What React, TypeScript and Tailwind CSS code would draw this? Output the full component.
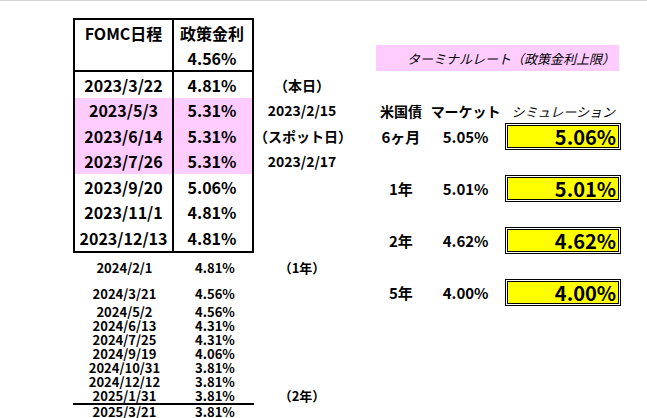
import React from 'react';

const tableRows = [
  { date: '2023/3/22', rate: '4.81%', pink: false, note: '（本日）' },
  { date: '2023/5/3', rate: '5.31%', pink: true, note: '2023/2/15' },
  { date: '2023/6/14', rate: '5.31%', pink: true, note: '（スポット日）' },
  { date: '2023/7/26', rate: '5.31%', pink: true, note: '2023/2/17' },
  { date: '2023/9/20', rate: '5.06%', pink: false, note: '' },
  { date: '2023/11/1', rate: '4.81%', pink: false, note: '' },
  { date: '2023/12/13', rate: '4.81%', pink: false, note: '' },
];

// 表の下の行（高さはシートの行高に合わせる）
const lowerRows = [
  { date: '2024/2/1', rate: '4.81%', note: '（1年）', h: 'h-[30px]' },
  { date: '2024/3/21', rate: '4.56%', note: '', h: 'h-[22px]' },
  { date: '2024/5/2', rate: '4.56%', note: '', h: 'h-[14px]' },
  { date: '2024/6/13', rate: '4.31%', note: '', h: 'h-[14px]' },
  { date: '2024/7/25', rate: '4.31%', note: '', h: 'h-[14px]' },
  { date: '2024/9/19', rate: '4.06%', note: '', h: 'h-[14px]' },
  { date: '2024/10/31', rate: '3.81%', note: '', h: 'h-[14px]' },
  { date: '2024/12/12', rate: '3.81%', note: '', h: 'h-[14px]' },
  { date: '2025/1/31', rate: '3.81%', note: '（2年）', h: 'h-[14px]' },
];

const bonds = [
  { term: '6ヶ月', market: '5.05%', sim: '5.06%' },
  { term: '1年', market: '5.01%', sim: '5.01%' },
  { term: '2年', market: '4.62%', sim: '4.62%' },
  { term: '5年', market: '4.00%', sim: '4.00%' },
];

function SimBox({ value }: { value: string }) {
  return (
    <div className="h-[27px] w-[116px] border border-black bg-white p-[1px]">
      <div className="flex h-full items-center justify-end border border-black bg-[#ffff00] pr-[2px] text-[20px] font-bold leading-none">
        {value}
      </div>
    </div>
  );
}

function LowerRow({ date, rate, note, h }: { date: string; rate: string; note: string; h: string }) {
  return (
    <div className={`flex ${h}`}>
      <div className="flex w-[103px] items-center justify-center">{date}</div>
      <div className="flex w-[78px] items-center justify-center">{rate}</div>
      <div className="flex w-[96px] items-center justify-center">{note}</div>
    </div>
  );
}

export default function App() {
  return (
    <div className="h-[418px] w-[647px] overflow-hidden border-t border-[#d4d4d4] bg-white font-['Noto_Sans_CJK_JP','Liberation_Sans',sans-serif] text-black">
      <div className="flex pl-[73px] pt-[17px]">
        {/* 左側：FOMC日程表 */}
        <div className="w-[277px]">
          <div className="flex">
            <div className="w-[181px] border-2 border-black text-[16px] font-bold leading-none">
              <div className="flex border-b-2 border-black">
                <div className="w-[99px] border-r-2 border-black">
                  <div className="flex h-[25px] items-center justify-center">FOMC日程</div>
                  <div className="h-[25px]" />
                </div>
                <div className="w-[76px]">
                  <div className="flex h-[25px] items-center justify-center">政策金利</div>
                  <div className="flex h-[25px] items-center justify-center">4.56%</div>
                </div>
              </div>
              {tableRows.map((r) => (
                <div key={r.date} className={`flex h-[25.5px] ${r.pink ? 'bg-[#ffccff]' : ''}`}>
                  <div className="flex w-[99px] items-center justify-center border-r-2 border-black">{r.date}</div>
                  <div className="flex w-[76px] items-center justify-center">{r.rate}</div>
                </div>
              ))}
            </div>
            <div className="w-[96px] pt-[54px] text-[14px] font-bold leading-none">
              {tableRows.map((r) => (
                <div key={r.date} className="flex h-[25.5px] items-center justify-center">
                  {r.note}
                </div>
              ))}
            </div>
          </div>

          <div className="text-[13px] font-bold leading-none">
            {lowerRows.map((r) => (
              <LowerRow key={r.date} {...r} />
            ))}
            <div className="h-[2px] w-[181px] bg-black" />
            <LowerRow date="2025/3/21" rate="3.81%" note="" h="h-[13px]" />
          </div>
        </div>

        {/* 右側：ターミナルレートと米国債 */}
        <div className="ml-[26px] mt-[27px] w-[245px]">
          <div className="flex h-[26px] w-[243px] items-center justify-end bg-[#ffccff] pr-[4px] text-[13px] italic leading-none">
            ターミナルレート（政策金利上限）
          </div>
          <div className="mt-[28px] flex h-[24px] items-center leading-none">
            <div className="w-[50px] text-center text-[14px] font-bold">米国債</div>
            <div className="w-[80px] text-center text-[14px] font-bold">マーケット</div>
            <div className="w-[116px] text-center text-[13px] italic">シミュレーション</div>
          </div>
          <div className="flex flex-col gap-[25px]">
            {bonds.map((b) => (
              <div key={b.term} className="flex items-center text-[15px] font-bold leading-none">
                <div className="w-[50px] text-center">{b.term}</div>
                <div className="w-[80px] text-center">{b.market}</div>
                <SimBox value={b.sim} />
              </div>
            ))}
          </div>
        </div>
      </div>
    </div>
  );
}
